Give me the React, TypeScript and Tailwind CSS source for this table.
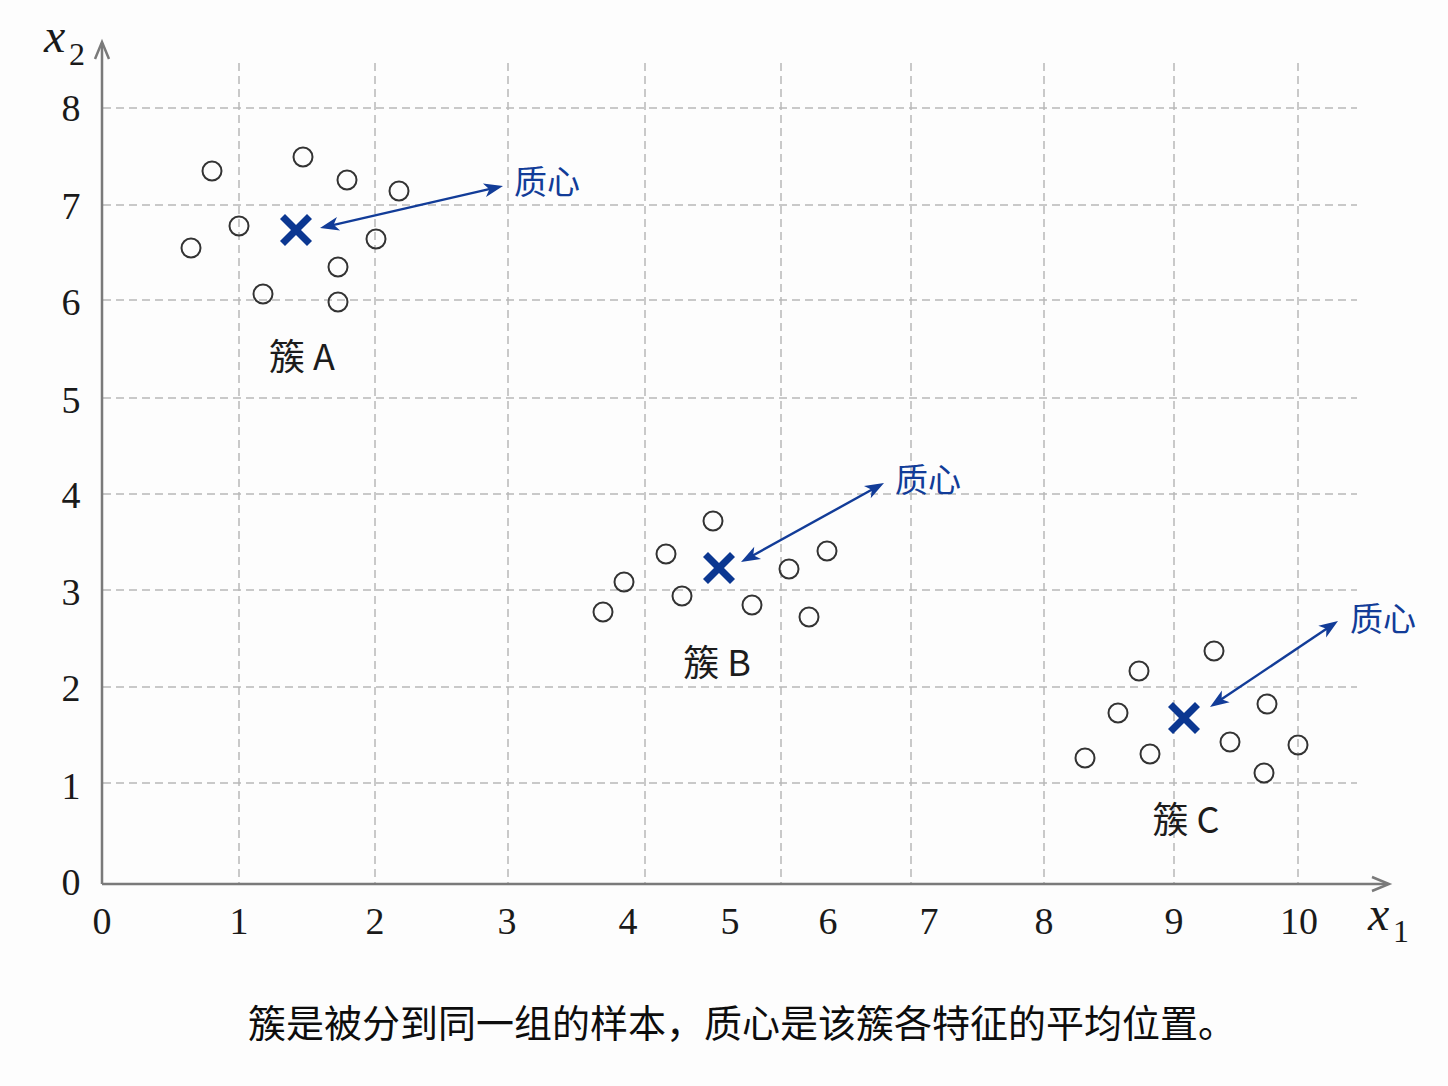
const BLUE = "#123c98"

const gridX = [239, 375, 508, 645, 781, 911, 1044, 1174, 1298]
const gridY = [108, 205, 300, 398, 494, 590, 687, 783]

const xTicks = [
  { t: "0", x: 102 }, { t: "1", x: 239 }, { t: "2", x: 375 }, { t: "3", x: 507 },
  { t: "4", x: 628 }, { t: "5", x: 730 }, { t: "6", x: 828 }, { t: "7", x: 929 },
  { t: "8", x: 1044 }, { t: "9", x: 1174 }, { t: "10", x: 1299 },
]
const yTicks = [
  { t: "8", y: 108 }, { t: "7", y: 206 }, { t: "6", y: 302 }, { t: "5", y: 400 },
  { t: "4", y: 495 }, { t: "3", y: 592 }, { t: "2", y: 688 }, { t: "1", y: 786 }, { t: "0", y: 882 },
]

const clusters = [
  {
    name: "簇 A", label: [302, 357], center: [296, 230],
    arrow: [320, 228, 503, 186], tag: [547, 182],
    pts: [[212, 171], [303, 157], [347, 180], [399, 191], [239, 226], [191, 248], [376, 239], [338, 267], [263, 294], [338, 302]],
  },
  {
    name: "簇 B", label: [717, 663], center: [719, 568],
    arrow: [741, 562, 884, 483], tag: [928, 480],
    pts: [[713, 521], [666, 554], [827, 551], [624, 582], [789, 569], [682, 596], [752, 605], [603, 612], [809, 617]],
  },
  {
    name: "簇 C", label: [1186, 820], center: [1184, 718],
    arrow: [1210, 707, 1338, 621], tag: [1383, 619],
    pts: [[1214, 651], [1139, 671], [1267, 704], [1118, 713], [1230, 742], [1298, 745], [1085, 758], [1150, 754], [1264, 773]],
  },
]

// arrowhead polygon pointing at (tx, ty), coming from (fx, fy)
function head(tx: number, ty: number, fx: number, fy: number) {
  const dx = tx - fx, dy = ty - fy
  const len = Math.hypot(dx, dy)
  const ux = dx / len, uy = dy / len
  const L = 19, W = 7
  const bx = tx - ux * L, by = ty - uy * L
  return `${tx},${ty} ${bx - uy * W},${by + ux * W} ${tx - ux * (L - 5)},${ty - uy * (L - 5)} ${bx + uy * W},${by - ux * W}`
}

function DoubleArrow({ a }: { a: number[] }) {
  const [x1, y1, x2, y2] = a
  const dx = x2 - x1, dy = y2 - y1
  const len = Math.hypot(dx, dy)
  const ux = dx / len, uy = dy / len
  return (
    <g>
      <line x1={x1 + ux * 12} y1={y1 + uy * 12} x2={x2 - ux * 12} y2={y2 - uy * 12} stroke={BLUE} strokeWidth={2.4} />
      <polygon points={head(x1, y1, x2, y2)} fill={BLUE} />
      <polygon points={head(x2, y2, x1, y1)} fill={BLUE} />
    </g>
  )
}

function Cross({ c }: { c: number[] }) {
  const [x, y] = c
  const d = 13.5
  return (
    <g stroke="#0b3791" strokeWidth={7}>
      <line x1={x - d} y1={y - d} x2={x + d} y2={y + d} />
      <line x1={x - d} y1={y + d} x2={x + d} y2={y - d} />
    </g>
  )
}

export default function App() {
  return (
    <div className="w-[1448px] h-[1086px] bg-[#fdfdfd] overflow-hidden">
      <svg width={1448} height={990} viewBox="0 0 1448 990" className="block">
        {/* grid */}
        <g stroke="#b8b8b8" strokeWidth={1.5} strokeDasharray="8 5">
          {gridX.map(x => <line key={x} x1={x} y1={63} x2={x} y2={883} />)}
          {gridY.map(y => <line key={y} x1={103} y1={y} x2={1357} y2={y} />)}
        </g>

        {/* axes */}
        <g stroke="#7a7a7a" strokeWidth={2.5} fill="none">
          <line x1={102} y1={884} x2={1388} y2={884} />
          <line x1={102} y1={884} x2={102} y2={43} />
          <polyline points="1372,877 1389,884 1372,891" />
          <polyline points="95,59 102,42 109,59" />
        </g>

        {/* tick labels + axis names */}
        <g fill="#1a1a1a" className="font-['Liberation_Serif','Times_New_Roman',serif]">
          <g textAnchor="middle" fontSize={38}>
            {yTicks.map(t => <text key={t.t} x={71} y={t.y + 13}>{t.t}</text>)}
            {xTicks.map(t => <text key={t.t} x={t.x} y={934}>{t.t}</text>)}
          </g>
          <text x={44} y={52} fontSize={48} fontStyle="italic">x</text>
          <text x={69} y={65} fontSize={32}>2</text>
          <text x={1368} y={930} fontSize={48} fontStyle="italic">x</text>
          <text x={1393} y={942} fontSize={32}>1</text>
        </g>

        {/* clusters */}
        <g className="font-['Noto_Sans_CJK_SC','Noto_Sans',sans-serif]">
          {clusters.map(c => (
            <g key={c.name}>
              {c.pts.map(([x, y], i) => (
                <circle key={i} cx={x} cy={y} r={9.5} fill="none" stroke="#333" strokeWidth={2} />
              ))}
              <Cross c={c.center} />
              <DoubleArrow a={c.arrow} />
              <text x={c.tag[0]} y={c.tag[1] + 12} fill={BLUE} fontSize={33} textAnchor="middle">质心</text>
              <text x={c.label[0]} y={c.label[1] + 13} fill="#1c1c1c" fontSize={36} textAnchor="middle">{c.name}</text>
            </g>
          ))}
        </g>
      </svg>

      <div className="flex h-[60px] items-center justify-center pl-[36px] text-[38px] text-[#0d0d0d] whitespace-nowrap font-['Noto_Sans_CJK_SC','Noto_Sans',sans-serif]">
        簇是被分到同一组的样本，质心是该簇各特征的平均位置。
      </div>
    </div>
  )
}
